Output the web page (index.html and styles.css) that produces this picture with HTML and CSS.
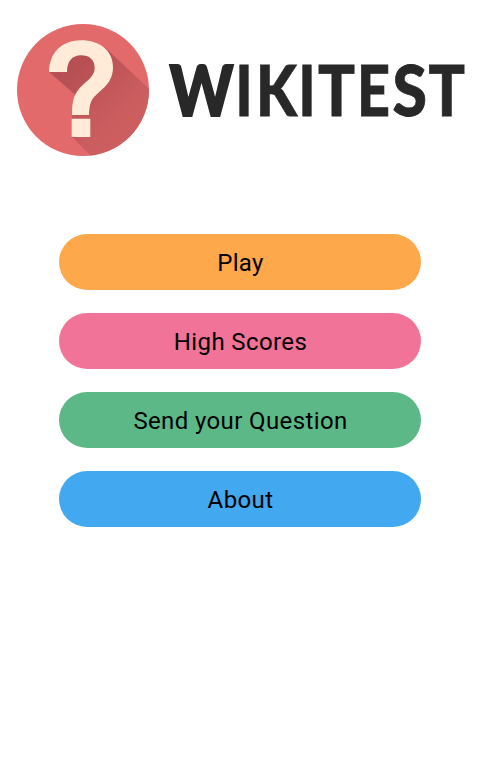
FILE: index.html
```html
<!DOCTYPE html>
<html lang="en">
<head>
<meta charset="utf-8">
<title>Wikitest</title>
<link rel="stylesheet" href="styles.css">
</head>
<body>
<header class="brand">
  <svg class="logo" viewBox="21 27 396 396" aria-hidden="true">
    <defs>
      <clipPath id="disc"><circle cx="219" cy="225" r="198"/></clipPath>
      <linearGradient id="shade" gradientUnits="userSpaceOnUse" x1="200" y1="170" x2="340" y2="310">
        <stop offset="0" stop-color="#b75054"/>
        <stop offset="1" stop-color="#cd5e60"/>
      </linearGradient>
    </defs>
    <circle cx="219" cy="225" r="198" fill="#e26a6b"/>
    <path clip-path="url(#disc)" fill="url(#shade)" d="M117 171L196 240L186 310V366L270 450H450V252L286 98L213 110Z"/>
    <path fill="#ffebd8" d="M117 171C118 112 157 76 213 76C271 76 309 108 309 157C309 192 292 210 267 232C243 252 238 266 237 300H186C186 255 192 234 219 209C242 188 254 179 254 158C254 134 238 121 213 121C186 121 171 140 171 171ZM185 311H241V366H185Z"/>
  </svg>
  <h1 class="wordmark">
    <svg class="word" viewBox="0 0 304 100">
      <g class="letters">
        <text class="wide" x="1.500" y="75.500" textLength="64" lengthAdjust="spacingAndGlyphs">W</text>
        <text x="67.500" y="75.500" textLength="17" lengthAdjust="spacingAndGlyphs">I</text>
        <text x="88" y="75.500" textLength="41" lengthAdjust="spacingAndGlyphs">K</text>
        <text x="130.500" y="75.500" textLength="17" lengthAdjust="spacingAndGlyphs">I</text>
        <text x="150" y="75.500" textLength="37" lengthAdjust="spacingAndGlyphs">T</text>
        <text x="189" y="75.500" textLength="33" lengthAdjust="spacingAndGlyphs">E</text>
        <text x="224.500" y="75.500" textLength="34.500" lengthAdjust="spacingAndGlyphs">S</text>
        <text x="260.500" y="75.500" textLength="36.500" lengthAdjust="spacingAndGlyphs">T</text>
      </g>
    </svg>
  </h1>
</header>
<nav class="menu">
  <button class="item play">Play</button>
  <button class="item scores">High Scores</button>
  <button class="item send">Send your Question</button>
  <button class="item about">About</button>
</nav>
</body>
</html>
```
FILE: styles.css
```css
body {
  margin: 0;
  min-height: 760px;
  background: #fff;
  font-family: Roboto, sans-serif;
}

.brand {
  display: flex;
  gap: 19px;
  padding: 24px 0 0 17px;
}

.logo {
  width: 132px;
  height: 132px;
}

.wordmark {
  margin: 16px 0 0;
}

.word {
  display: block;
  width: 304px;
  height: 100px;
}

.letters {
  font: 900 70.5px Lato, sans-serif;
  fill: #282828;
  stroke: #282828;
  stroke-width: 0.8px;
}

.wide {
  stroke-width: 2px;
}

.menu {
  display: flex;
  flex-direction: column;
  gap: 23px;
  width: 362px;
  margin: 78px auto 0;
}

.item {
  height: 56px;
  padding: 2px 0 0 1px;
  border: 0;
  border-radius: 28px;
  color: #000;
  font: 24px Roboto, sans-serif;
  letter-spacing: 0.38px;
}

.play { background: #fda84a; }
.scores { background: #f27398; }
.send { background: #5cb987; }
.about { background: #42a8f0; }
```
